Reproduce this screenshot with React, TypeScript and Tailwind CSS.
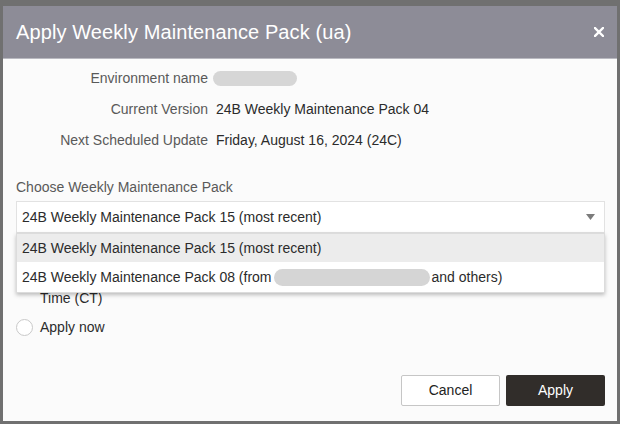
import React from 'react';

const font = { fontFamily: '"Liberation Sans", Arial, sans-serif' };

const InfoRow: React.FC<{ label: string; children: React.ReactNode }> = ({ label, children }) => (
    <>
        <div className="h-[31px] flex items-center justify-end text-[14px] text-[#595959]">{label}</div>
        <div className="h-[31px] flex items-center text-[14px] text-[#2b2b2b]">{children}</div>
    </>
);

const Radio: React.FC = () => (
    <span className="mt-[2px] w-[17px] h-[17px] shrink-0 rounded-full border border-[#c9c9c9] bg-white" />
);

export default function App() {
    return (
        <div className="w-[620px] h-[424px] bg-[#707070] pt-[6px] px-[3px] overflow-hidden" style={font}>
            <div className="w-[614px] h-[415px] bg-[#fbfbfb] flex flex-col">
                {/* header */}
                <div className="h-[53px] shrink-0 bg-[#8d8c97] border-b border-[#b9b9c0] flex items-center justify-between pl-[13px] pr-[12px]">
                    <h2 className="text-[20px] text-white tracking-[0.1px] -mt-[1px]">Apply Weekly Maintenance Pack (ua)</h2>
                    <svg width="10" height="10" viewBox="0 0 10 10" className="mr-[1px]">
                        <path d="M1 1 L9 9 M9 1 L1 9" stroke="white" strokeWidth="2.4" strokeLinecap="square" />
                    </svg>
                </div>

                <div className="flex-1 flex flex-col pl-[13px] pr-[12px]">
                    <div className="grid grid-cols-[192px_1fr] gap-x-2 mt-[4px]">
                        <InfoRow label="Environment name">
                            <span className="-ml-[3px] w-[84px] h-[15px] rounded-full bg-[#d6d6d6] blur-[0.6px]" />
                        </InfoRow>
                        <InfoRow label="Current Version">24B Weekly Maintenance Pack 04</InfoRow>
                        <InfoRow label="Next Scheduled Update">Friday, August 16, 2024 (24C)</InfoRow>
                    </div>

                    <label className="mt-[21px] h-[20px] flex items-center text-[14px] text-[#595959]">
                        Choose Weekly Maintenance Pack
                    </label>

                    <div className="relative mt-[4px]">
                        <div className="h-[32px] border border-[#e2e2e2] bg-white flex items-center justify-between pl-[5px] pr-[9px] text-[14px] text-[#2b2b2b]">
                            <span>24B Weekly Maintenance Pack 15 (most recent)</span>
                            <svg width="9" height="6" viewBox="0 0 9 6">
                                <path d="M0 0 H9 L4.5 6 Z" fill="#7b7b7b" />
                            </svg>
                        </div>

                        {/* open list, lies over the radio group */}
                        <ul className="absolute left-0 right-0 top-full z-10 bg-white border border-[#dcdcdc] shadow-[0_2px_4px_rgba(0,0,0,0.25)] text-[14px] text-[#2b2b2b]">
                            <li className="h-[28px] flex items-center pl-[5px] bg-[#ececec]">
                                24B Weekly Maintenance Pack 15 (most recent)
                            </li>
                            <li className="h-[30px] flex items-center pl-[5px]">
                                <span>24B Weekly Maintenance Pack 08 (from</span>
                                <span className="ml-[2px] w-[156px] h-[17px] rounded-full bg-[#d5d5d5] blur-[0.6px]" />
                                <span className="ml-[2px]">and others)</span>
                            </li>
                        </ul>
                    </div>

                    <div className="mt-[34px] flex flex-col gap-[8px] text-[14px] text-[#2b2b2b]">
                        <div className="flex gap-[7px] leading-[21px]">
                            <Radio />
                            <div className="flex flex-col">
                                <span className="h-[21px]" />
                                <span>Time (CT)</span>
                            </div>
                        </div>
                        <div className="flex gap-[7px] leading-[21px]">
                            <Radio />
                            <span>Apply now</span>
                        </div>
                    </div>

                    <div className="mt-auto mb-[15px] flex justify-end gap-[6px]">
                        <button className="w-[99px] h-[31px] border border-[#c6c6c6] bg-white rounded-[2px] text-[14px] text-[#222]">
                            Cancel
                        </button>
                        <button className="w-[99px] h-[31px] bg-[#312d2a] rounded-[2px] text-[14px] text-white">
                            Apply
                        </button>
                    </div>
                </div>
            </div>
        </div>
    );
}
